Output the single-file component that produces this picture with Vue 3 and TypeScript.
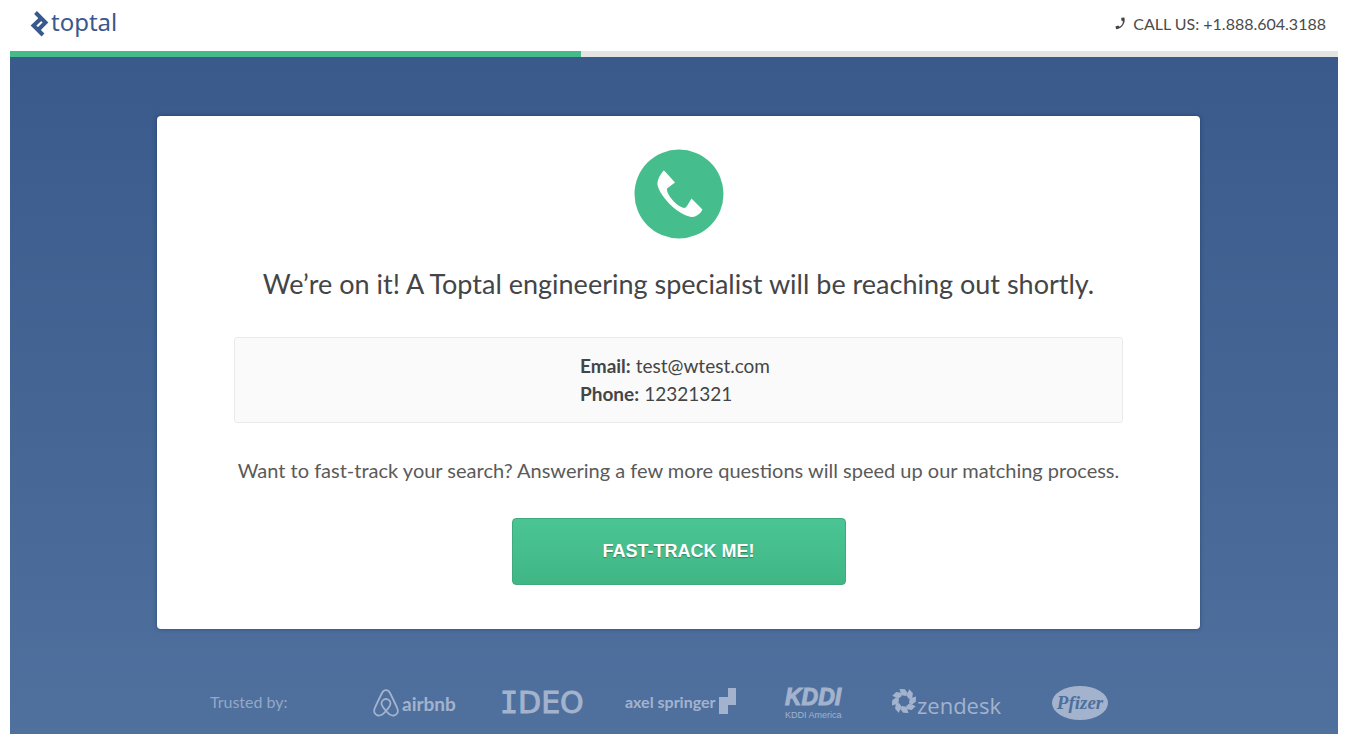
<script setup lang="ts">
const progress = 43
const phone = '+1.888.604.3188'
const contact = [
  { label: 'Email:', value: 'test@wtest.com' },
  { label: 'Phone:', value: '12321321' },
]
const petals = [0, 45, 90, 135, 180, 225, 270, 315]
</script>

<template>
  <div class="page">
    <header class="header">
      <a class="brand" href="#" aria-label="toptal">
        <svg width="19" height="28" viewBox="0 0 19 28" aria-hidden="true" fill="none" stroke="#38598d" stroke-width="4">
          <path d="M5.500 2.500 L15.500 12.500 L7.500 20.500" />
          <path d="M11.500 8 L3.500 15.500 L13 25" />
        </svg>
        <span>toptal</span>
      </a>
      <a class="call" href="tel:+18886043188">
        <svg width="11" height="13" viewBox="0 0 11 13" aria-hidden="true">
          <path d="M6.3 0.8 L9.3 0.4 C11 5.2 7.6 11.3 1.2 12.2 L0.4 9.5 L3.4 8.6 L4.4 9.7 C6.9 8.6 8.1 6.2 7.8 3.9 L6.3 3.6 Z" fill="#444" />
        </svg>
        <span>CALL US: {{ phone }}</span>
      </a>
    </header>
    <div class="track" role="progressbar" :aria-valuenow="progress" aria-valuemin="0" aria-valuemax="100">
      <div class="fill" :style="{ width: progress + '%' }"></div>
    </div>

    <main class="stage">
      <section class="card">
        <svg class="badge" width="90" height="90" viewBox="0 0 90 90" aria-hidden="true">
          <circle cx="45" cy="45" r="44.5" fill="#45bd8c" />
          <path d="M29.5 21.5 Q30.5 21.5 31.5 23 L41 33.5 L33 39.500 C32 45 42 57 50 59 Q52 59 53 57 L57.500 49.500 L68.500 60.500 Q66 65.500 61 67.500 Q56 69 48 64.500 C36 58 25 44 23.500 36 C23 31 26 26 29.500 21.500 Z" fill="#fff" />
        </svg>
        <h1>We’re on it! A Toptal engineering specialist will be reaching out shortly.</h1>
        <div class="contact">
          <dl>
            <div v-for="row in contact" :key="row.label">
              <dt>{{ row.label }}</dt>
              <dd>{{ row.value }}</dd>
            </div>
          </dl>
        </div>
        <p class="prompt">Want to fast-track your search? Answering a few more questions will speed up our matching process.</p>
        <button class="cta" type="button">FAST-TRACK ME!</button>
      </section>

      <footer class="trusted">
        <span class="label">Trusted by:</span>
        <div class="logo airbnb">
          <svg width="26" height="28" viewBox="0 0 26 28" aria-hidden="true" fill="none" stroke="currentColor" stroke-width="1.8">
            <path d="M13 22 C10 18.500 8.500 16.500 8.500 14.500 A4.500 4.500 0 0 1 17.500 14.500 C17.500 16.500 16 18.500 13 22 C10 25.500 7.500 27 5 26.500 C2 26 .5 23 1.500 20 C3 16 7 8 9 4 C11 .2 15 .2 17 4 C19 8 23 16 24.500 20 C25.500 23 24 26 21 26.500 C18.500 27 16 25.500 13 22 Z" />
          </svg>
          <span>airbnb</span>
        </div>
        <div class="logo ideo"><span class="slab">I</span><span>DEO</span></div>
        <div class="logo axel">
          <span>axel springer</span>
          <svg width="17" height="26" viewBox="0 0 17 26" aria-hidden="true">
            <path d="M9 0 H17 V17 H9 V26 H0 V9 H9 Z" fill="currentColor" />
          </svg>
        </div>
        <div class="logo kddi">
          <span class="kddi-name">KDDI</span>
          <span class="kddi-sub">KDDI America</span>
        </div>
        <div class="logo zendesk">
          <svg width="26" height="26" viewBox="0 0 26 26" aria-hidden="true">
            <path v-for="angle in petals" :key="angle" d="M8.500 1 L13.800 1.200 L16.600 5 L15 8 L10.500 7.300 Z" :transform="`rotate(${angle} 13 13)`" fill="currentColor" />
          </svg>
          <span>zendesk</span>
        </div>
        <div class="logo pfizer"><span>Pfizer</span></div>
      </footer>
    </main>
  </div>
</template>

<style>
body {
  margin: 0;
  background: #fff;
}
</style>

<style scoped>
.page {
  display: flex;
  flex-direction: column;
  min-height: 100vh;
  box-sizing: border-box;
  padding: 0 8px 2px 10px;
  font-family: Lato, "Liberation Sans", sans-serif;
  color: #444547;
}
.header {
  display: flex;
  align-items: center;
  justify-content: space-between;
  height: 51px;
  box-sizing: border-box;
  padding: 0 12px 4px 20px;
}
.brand {
  display: flex;
  align-items: center;
  gap: 2px;
  color: #38598d;
  font: 24px/24px "Noto Sans", sans-serif;
  text-decoration: none;
}
.brand span {
  padding-bottom: 4px;
}
.call {
  display: flex;
  align-items: center;
  gap: 7px;
  color: #4b4b4b;
  font-size: 16px;
  text-decoration: none;
}
.track {
  height: 6px;
  background: #e4e4e4;
}
.fill {
  height: 100%;
  background: #45bb89;
}
.stage {
  flex: 1;
  padding: 59px 138px 0 147px;
  background: linear-gradient(#395a8b, #50719e);
}
.card {
  display: flex;
  flex-direction: column;
  align-items: center;
  box-sizing: border-box;
  padding: 33px 77px 44px;
  border-radius: 4px;
  background: #fff;
  box-shadow: 0 0 4px rgba(20, 40, 80, 0.5);
}
h1 {
  margin: 28px 0 36px;
  font-size: 27px;
  font-weight: 400;
  line-height: 34px;
  white-space: nowrap;
}
.contact {
  display: flex;
  justify-content: center;
  align-self: stretch;
  padding: 14px 0;
  border: 1px solid #ebebeb;
  border-radius: 3px;
  background: #fafafa;
}
dl {
  width: 197px;
  margin: 0;
  font-size: 19px;
  line-height: 28px;
}
dl div {
  display: flex;
  gap: 5px;
}
dt {
  font-weight: 700;
}
dd {
  margin: 0;
}
.prompt {
  margin: 34px 0 35px;
  color: #5a5a5a;
  font-size: 20px;
  line-height: 26px;
  white-space: nowrap;
}
.cta {
  width: 334px;
  height: 67px;
  border: 1px solid #3faa7d;
  border-radius: 4px;
  background: linear-gradient(#4bc594, #40b685);
  color: #fff;
  font: 700 18px "Liberation Sans", sans-serif;
  text-shadow: 0 1px 1px rgba(0, 0, 0, 0.3);
}
.trusted {
  display: flex;
  align-items: center;
  height: 104px;
  box-sizing: border-box;
  padding: 44px 0 0 53px;
  color: #a3b3cd;
}
.label {
  width: 163px;
  padding-bottom: 4px;
  color: #93a8c6;
  font-size: 16px;
}
.logo {
  display: flex;
  align-items: center;
  flex: none;
  white-space: nowrap;
}
.airbnb {
  width: 127px;
  gap: 3px;
  font: 700 19px Lato, sans-serif;
}
.ideo {
  width: 125px;
  font: 30px/30px "DejaVu Sans", sans-serif;
  -webkit-text-stroke: 1px currentColor;
}
.slab {
  font-family: "DejaVu Sans Mono", monospace;
}
.axel {
  width: 160px;
  gap: 3px;
  font: 700 16px Lato, sans-serif;
}
.axel span {
  padding-bottom: 4px;
}
.axel svg {
  margin-bottom: 4px;
}
.kddi {
  flex-direction: column;
  align-items: flex-start;
  width: 106px;
}
.kddi-name {
  font: italic 700 23px/24px "Liberation Sans", sans-serif;
  -webkit-text-stroke: 1px currentColor;
}
.kddi-sub {
  font: 9px/12px "Liberation Sans", sans-serif;
}
.zendesk {
  width: 161px;
  font: 22px/30px "Open Sans", sans-serif;
}
.zendesk svg {
  margin-bottom: 5px;
}
.zendesk span {
  padding-top: 4px;
}
.pfizer {
  justify-content: center;
  width: 56px;
  height: 34px;
  border-radius: 50%;
  background: #a3b3cd;
  color: #4e6f9c;
  font: italic 700 19px/30px "Liberation Serif", serif;
}
</style>
